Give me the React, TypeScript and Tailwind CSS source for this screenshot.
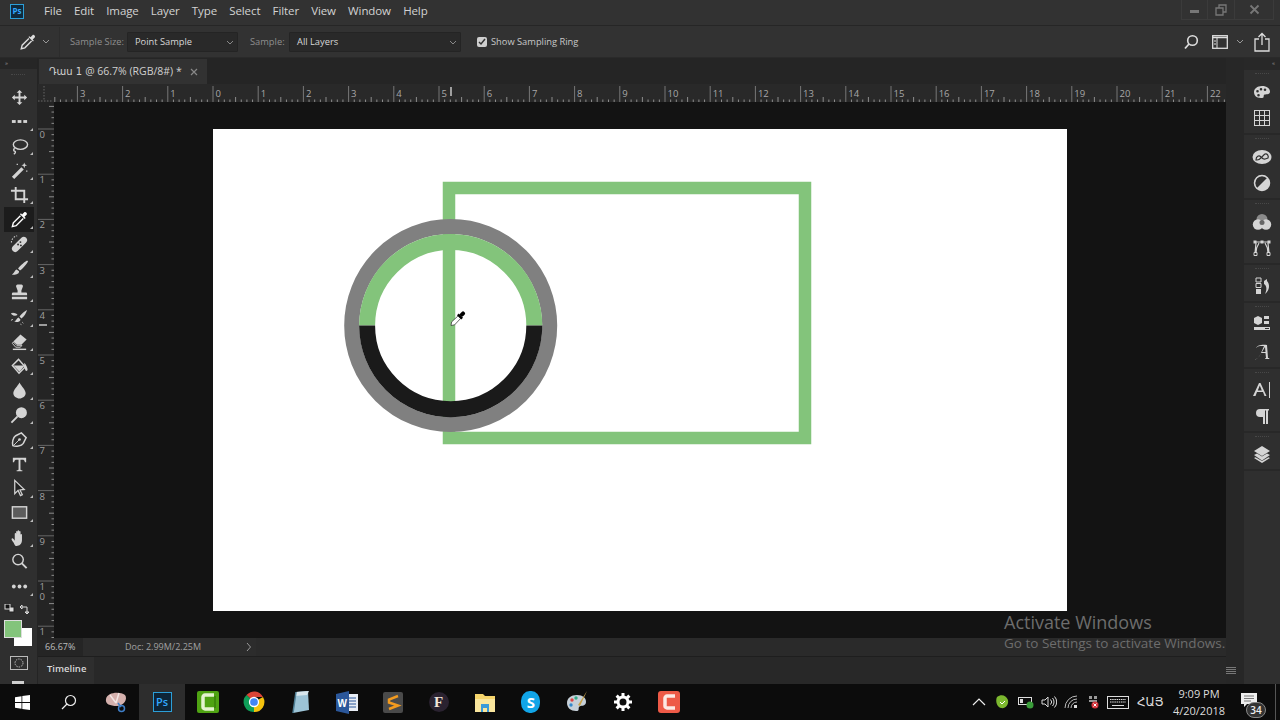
import React from "react";

const F = "[font-family:'Open_Sans','Noto_Sans','DejaVu_Sans',sans-serif]";

const Svg = ({ s = 20, c = "", children }: { s?: number; c?: string; children: React.ReactNode }) => (
  <svg width={s} height={s} viewBox="0 0 20 20" className={c} fill="#d4d4d4" stroke="none">{children}</svg>
);
const L = "#d4d4d4";
const line = { fill: "none", stroke: L, strokeWidth: 1.5 } as const;

const tools: React.ReactNode[] = [
  <path d="M10 2l3 3h-2v4h4V7l3 3-3 3v-2h-4v4h2l-3 3-3-3h2v-4H5v2l-3-3 3-3v2h4V5H7z" />,
  <><rect x="2" y="8.500" width="4" height="3" /><rect x="8" y="8.500" width="4" height="3" /><rect x="14" y="8.500" width="4" height="3" /></>,
  <><ellipse cx="11" cy="8" rx="7.500" ry="5" {...line} /><path d="M5 12c-2 1-1 3 0 3s1 2-1 3" {...line} /></>,
  <><path d="M2 16.500l10-10 2.500 2.500-10 10z" /><path d="M15 1.500l.8 2.200 2.200.8-2.200.8-.8 2.200-.8-2.200-2.200-.8 2.200-.8zM7 3h1.300v1.300H7zM17 10h1.300v1.300H17z" /></>,
  <path d="M5 1h2v3h9v9h3v2h-3v3h-2v-3H5V6H1V4h4zM7 6v7h7V6z" />,
  <><path d="M11 6L3.500 13.500 2.500 17.500 6.500 16.500 14 9" fill="none" stroke="#fff" strokeWidth="1.500" /><path d="M10.500 4.500l5 5 1-1-1.300-1.300 2.300-2.300c1.200-1.200-1.200-3.700-2.500-2.500l-2.300 2.300L11.500 3.500z" fill="#fff" /></>,
  <><path d="M3 13l9-9c1.500-1.500 3.500-1.500 5 0s1.500 3.500 0 5l-9 9c-1.500 1.500-3.500 1.500-5 0s-1.500-3.500 0-5z" /><circle cx="8.500" cy="11" r="1" fill="#2f2f2f" /><circle cx="11" cy="8.500" r="1" fill="#2f2f2f" /><circle cx="11.500" cy="12" r="1" fill="#2f2f2f" /><path d="M1.500 9a7 7 0 0 1 6-7" fill="none" stroke={L} strokeWidth="1.200" strokeDasharray="1.500 1.500" /></>,
  <path d="M18 1.500c-2 1-7 5-9.500 8.500l2 2c3-2 7-7 8.500-9.500zM7 11c-2 .500-2 3-5 5.500 3.500.500 8-.500 7.500-3.500z" />,
  <path d="M8 1.500h4c1 0 2 1 1.500 2.500L12 8v2h5c1 0 1 1 1 3H2c0-2 0-3 1-3h5V8L6.500 4C6 2.500 7 1.500 8 1.500zM2 14.500h16V17H2z" />,
  <><path d="M18 2c-2 1-6 4-8 7l2 2c3-2 5-6 6-9zM9 10c-2 .500-2 3-4.500 4.500 3 .500 6.500 0 6.500-2.500z" /><path d="M1.500 6c2-1 4 0 6 1-2 1-4 1-6-1zM1 13l2-1M13 15l1 1M11 17l1 .5" stroke={L} fill={L} /></>,
  <><path d="M11 2.500l6.500 5.500-5.500 5.500H7.500L3.500 10z" /><path d="M3.500 10.500l3.500 3.500h5.500l-1.500 2H6l-3.500-4z" fill="#2f2f2f" stroke={L} /><path d="M3 17.500h14V19H3z" /></>,
  <><path d="M2.500 9L9 2.500l7 8-6.500 6.500z" fill="none" stroke={L} strokeWidth="1.500" /><path d="M3.500 9h12l-5.500 6.500z" /><path d="M15 6c2 2 3.500 5 3.500 7.500 0 1.500-2.500 1.500-2.500 0l-1-4z" /></>,
  <path d="M10 1.500c2 4 6.500 7.500 6.500 11.500 0 3.200-3.300 5.500-6.500 5.500S3.500 16.200 3.500 13c0-4 4.500-7.500 6.500-11.500z" />,
  <><circle cx="12" cy="7" r="5.800" /><path d="M8 11l-6.500 6.500" stroke={L} strokeWidth="2" /></>,
  <><path d="M3 16.500c-1-3 0-8.500 3-10.500l6-3 5 5-3 6c-2 3-8 4-11 2.500z" fill="none" stroke={L} strokeWidth="1.600" /><path d="M3.500 16.500l6-6" stroke={L} /><circle cx="10" cy="10" r="1.400" /></>,
  <path d="M3 3h14v4.500h-1.300C15.300 5.500 14.500 5 13 5h-2v10c0 .8.500 1 2 1v1H7v-1c1.500 0 2-.2 2-1V5H7C5.500 5 4.700 5.500 4.300 7.500H3z" />,
  <path d="M5 1.500l10 9.500-4.500.5 2.500 5-2 1-2.500-5.500L5 15.500z" fill="#222" stroke={L} strokeWidth="1.300" />,
  <rect x="2.500" y="4" width="15" height="12" fill="#5c5c5c" stroke={L} strokeWidth="1.500" />,
  <path d="M5 11V6c0-1 1.500-1 1.500 0v3-5c0-1 1.500-1 1.500 0v5-6c0-1 1.600-1 1.600 0v6-5c0-1 1.500-1 1.500 0v6-3c0-1 1.500-1 1.500 0v6c0 4-3 6-5.500 6S5 17 3.500 15 1 11.500 2 11s2 1 3 2.500z" />,
  <><circle cx="8.500" cy="8" r="5.500" fill="none" stroke={L} strokeWidth="1.500" /><path d="M12.500 12l5 5" stroke={L} strokeWidth="2" /></>,
  <><circle cx="4" cy="10" r="2" /><circle cx="10" cy="10" r="2" /><circle cx="16" cy="10" r="2" /></>,
];

const dock: React.ReactNode[][] = [
  [<path d="M10 4c5 0 8 2.500 8 5.500 0 4-5 2-6 3.500s1 3-3 3C4 16 2 13 2 10s3-6 8-6zM5.500 8a1.300 1.300 0 1 0 0 2.600 1.300 1.300 0 0 0 0-2.600zM9 6a1.300 1.300 0 1 0 0 2.600A1.300 1.300 0 0 0 9 6zM13 6.500a1.300 1.300 0 1 0 0 2.600 1.300 1.300 0 0 0 0-2.600zM6.500 12a1.300 1.300 0 1 0 0 2.600 1.300 1.300 0 0 0 0-2.600z" fillRule="evenodd" />,
   <path d="M2 2h16v16H2zM3 3v4h4V3zm5 0v4h4V3zm5 0v4h4V3zM3 8v4h4V8zm5 0v4h4V8zm5 0v4h4V8zM3 13v4h4v-4zm5 0v4h4v-4zm5 0v4h4v-4z" fillRule="evenodd" />],
  [<><ellipse cx="10" cy="10" rx="9.500" ry="7" /><path d="M4 13c0-4 3-5 5-3s3 3 7 1c1-2-1-5-3-4-3 2-4 6-8 6z" fill="none" stroke="#2f2f2f" strokeWidth="1.200" /></>,
   <><circle cx="10" cy="10" r="7.500" /><path d="M15 5A7 7 0 0 0 5 15z" fill="#2f2f2f" /><circle cx="10" cy="10" r="7.500" fill="none" stroke={L} strokeWidth="1.500" /></>],
  [<><circle cx="10" cy="7.500" r="5.500" fill="#8a8a8a" /><circle cx="6" cy="12.500" r="5.200" /><circle cx="14" cy="12.500" r="5.200" /><circle cx="10" cy="10.500" r="2.500" fill="#666" /></>,
   <><path d="M3 4h14M4 5l-1 10M16 5l1 10M7 5c-2 3-3 6-3 10M13 5c2 3 3 6 3 10" fill="none" stroke={L} strokeWidth="1.200" /><path d="M1.500 2.500h3v3h-3zM15.500 2.500h3v3h-3zM8.500 2.500h3v3h-3z" /><path d="M2 14.500h3v3H2zM15 14.500h3v3h-3z" fill="#2f2f2f" stroke={L} /></>],
  [<><path d="M4 2h5v4H4z" fill="none" stroke={L} /><path d="M4 7.500h5v4H4z" fill="none" stroke={L} /><path d="M4 13h5v5H4z" /><path d="M12 5l3-2v2c3 3 3 9-2 13 2-4 2-8-1-10v2z" /></>],
  [<><path d="M6 3l4 2v5l-4 2-4-2V5z" /><path d="M12 3h5v3h-5zM12 8h5v3h-5zM2 14h16v3H2z" /><path d="M13 15h4v1h-4z" fill="#2f2f2f" /></>,
   <path d="M3 17c3 0 4-2 6-6l3-7c-2 0-6-.500-8 2 1-3 7-4 11-3l1 13h1l.500 1h-4l-.500-1h1l-.500-5H9c-2 4-4 7-6 6zm7-7h3.500L13 5z" />],
  [<><path d="M1 16L7 3h1.500l6 13h-2l-1.500-4H5l-1.500 4zM5.800 10.500h4L7.800 5.500z" /><path d="M17 2h1v16h-1z" /></>,
   <path d="M8 3h9v1.500h-1V18h-2V4.500h-1V18h-2v-7H8a4 4 0 0 1 0-8z" />],
  [<path d="M10 2l8 5-8 5-8-5zM2 11l3-1.500 5 3 5-3 3 1.500-8 5.500z M2 14l1.500-.8L10 17l6.500-3.800L18 14l-8 5z" />],
];
const dockPad = [
  "pt-[12px] pb-[5px] gap-[6px]",
  "pt-[12px] pb-[5px] gap-[6px]",
  "pt-[12px] pb-[5px] gap-[6px]",
  "pt-[11px] pb-[5px] gap-[6px]",
  "pt-[10px] pb-[5px] gap-[9px]",
  "pt-[11px] pb-[5px] gap-[6px]",
  "pt-[11px] pb-[5px] gap-[6px]",
];

function HRuler() {
  const W = 1188;
  const ticks: React.ReactNode[] = [];
  for (let i = -28; i <= 180; i++) {
    const x = 213 - 38 + (i * 45.2) / 8;
    if (x < 0 || x > W) continue;
    const m = ((i % 8) + 8) % 8;
    const y = m === 0 ? 2 : m === 4 ? 13 : 15.5;
    ticks.push(<line key={i} x1={x} x2={x} y1={y} y2={18} stroke={m === 0 ? "#777" : "#8c8c8c"} strokeWidth="1" />);
  }
  const labels: React.ReactNode[] = [];
  for (let n = -3; n <= 22; n++) {
    labels.push(
      <text key={n} x={213 - 38 + n * 45.2 + 2.5} y={13} fontSize="9.500" fill="#a8a8a8" fontFamily="'Open Sans',sans-serif">{Math.abs(n)}</text>
    );
  }
  return (
    <svg width={W} height={18} className="block">
      {ticks}
      {labels}
      <path d="M0 17h14M6 2v15" stroke="#666" strokeDasharray="1.500 1.500" />
      <line x1={413} x2={413} y1="3" y2="12" stroke="#eee" strokeWidth="1.200" />
    </svg>
  );
}

function VRuler() {
  const H = 536;
  const ticks: React.ReactNode[] = [];
  for (let i = -4; i <= 90; i++) {
    const y = 129 - 102 + (i * 45.2) / 8;
    if (y < 0 || y > H) continue;
    const m = ((i % 8) + 8) % 8;
    const x = m === 0 ? 0 : m === 4 ? 11 : 13.5;
    ticks.push(<line key={i} y1={y} y2={y} x1={x} x2={16} stroke={m === 0 ? "#666" : "#8c8c8c"} strokeWidth="1" />);
  }
  const labels: React.ReactNode[] = [];
  for (let n = 0; n <= 11; n++) {
    const y0 = 129 - 102 + n * 45.2 + 9;
    const s = n === 11 ? "1" : String(n);
    s.split("").forEach((ch, k) =>
      labels.push(<text key={n + "-" + k} x={1.5} y={y0 + k * 10} fontSize="9.500" fill="#a0a0a0" fontFamily="'Open Sans',sans-serif">{ch}</text>)
    );
  }
  return (
    <svg width={16} height={H} className="block">
      {ticks}
      {labels}
      <line x1="1" x2="9" y1={223} y2={223} stroke="#eee" strokeWidth="1.200" />
    </svg>
  );
}

function Art() {
  const cx = 450.7, cy = 325.6, r = 83.6;
  return (
    <svg width={854} height={482} viewBox="213 129 854 482" className="block">
      <rect x="449" y="188" width="356" height="250" fill="none" stroke="#83c47b" strokeWidth="12.500" />
      <circle cx={cx} cy={cy} r={99} fill="none" stroke="#808080" strokeWidth="15" />
      <path d={`M${cx - r} ${cy}A${r} ${r} 0 0 1 ${cx + r} ${cy}`} fill="none" stroke="#83c47b" strokeWidth="16" />
      <path d={`M${cx - r} ${cy}A${r} ${r} 0 0 0 ${cx + r} ${cy}`} fill="none" stroke="#1a1a1a" strokeWidth="16" />
      <g transform="translate(459.500 317) rotate(45)">
        <path d="M-1.800 0h3.600l.3 9-2.100 3-2.100-3z" fill="#fff" stroke="#333" strokeWidth=".7" />
        <rect x="-3" y="-2" width="6" height="2.500" fill="#000" />
        <rect x="-2" y="-7" width="4" height="5.500" rx="1.800" fill="#000" />
      </g>
    </svg>
  );
}

const Task = ({ c = "", children }: { c?: string; children: React.ReactNode }) => (
  <div className={`w-[46.100px] h-full flex items-center justify-center ${c}`}>{children}</div>
);
const TB = ({ children, v = "0 0 28 28" }: { children: React.ReactNode; v?: string }) => (
  <svg width="28" height="28" viewBox={v}>{children}</svg>
);

const Chevron = () => (
  <svg width="8" height="6" viewBox="0 0 8 6" className="absolute right-[3px] top-[7px]"><path d="M1 1l3 3 3-3" fill="none" stroke="#888" strokeWidth="1" /></svg>
);

export default function App() {
  return (
    <div className={`relative w-[1280px] h-[720px] overflow-hidden flex flex-col bg-[#262626] text-[#d0d0d0] ${F}`}>
      {/* Title bar */}
      <div className="h-[26px] shrink-0 bg-[#323232] border-b border-[#262626] flex items-center relative pb-[3px]">
        <div className="w-[44px] flex justify-center">
          <div className="w-[14px] h-[15px] -ml-[10px] bg-[#0f2a3d] border border-[#2c9fd8] flex items-center justify-center text-[8px] text-[#31a8ff] font-bold leading-none">Ps</div>
        </div>
        <div className="flex text-[11.500px] text-[#d2d2d2] gap-[12.200px] tracking-[-0.1px]">
          {["File", "Edit", "Image", "Layer", "Type", "Select", "Filter", "View", "Window", "Help"].map((m) => (
            <span key={m}>{m}</span>
          ))}
        </div>
        <div className="absolute right-[6px] top-0 h-[20px] w-[93px] border border-[#3b3b3b] border-t-0 flex items-center">
          <div className="w-[26px] h-full flex items-center justify-center border-r border-[#3b3b3b]"><div className="w-[9px] h-[3px] bg-[#777] mt-[4px]" /></div>
          <div className="w-[27px] h-full flex items-center justify-center border-r border-[#3b3b3b]">
            <svg width="12" height="12" viewBox="0 0 12 12"><path d="M1 4h7v7H1zM4 4V1h7v7H8" fill="none" stroke="#777" strokeWidth="1.300" /></svg>
          </div>
          <div className="flex-1 flex items-center justify-center">
            <svg width="11" height="11" viewBox="0 0 11 11"><path d="M1.500 1.500l8 8M9.500 1.500l-8 8" stroke="#777" strokeWidth="1.800" /></svg>
          </div>
        </div>
      </div>

      {/* Options bar */}
      <div className="h-[32px] shrink-0 bg-[#323232] border-b border-[#2a2a2a] flex items-center relative pt-[1px]">
        <div className="w-[60px] h-full flex items-center border-r border-[#2c2c2c] pl-[19px] gap-[5px]">
          <svg width="18" height="18" viewBox="0 0 20 20">
            <path d="M11 6L3.500 13.500 2.500 17.500 6.500 16.500 14 9" fill="none" stroke="#ddd" strokeWidth="1.500" />
            <path d="M10.500 4.500l5 5 1-1-1.300-1.300 2.300-2.300c1.200-1.200-1.200-3.700-2.500-2.500l-2.300 2.300L11.500 3.500z" fill="#ddd" />
          </svg>
          <svg width="8" height="6" viewBox="0 0 8 6"><path d="M1 1l3 3 3-3" fill="none" stroke="#999" /></svg>
        </div>
        <span className="ml-[10px] w-[57px] text-[9.300px] text-[#8f8f8f] whitespace-nowrap">Sample Size:</span>
        <div className="relative w-[111px] h-[20px] bg-[#292929] border border-[#242424] flex items-center pl-[7px] text-[9.300px] text-[#d8d8d8] rounded-[1px]">Point Sample<Chevron /></div>
        <span className="ml-[12px] w-[39px] text-[9.300px] text-[#8f8f8f]">Sample:</span>
        <div className="relative w-[172px] h-[20px] bg-[#292929] border border-[#242424] flex items-center pl-[7px] text-[9.300px] text-[#d8d8d8] rounded-[1px]">All Layers<Chevron /></div>
        <div className="ml-[16px] w-[10px] h-[10px] rounded-[2px] bg-[#cfcfcf] flex items-center justify-center">
          <svg width="8" height="8" viewBox="0 0 8 8"><path d="M1 4l2 2 4-5" fill="none" stroke="#333" strokeWidth="1.500" /></svg>
        </div>
        <span className="ml-[4px] text-[9.300px] text-[#c8c8c8]">Show Sampling Ring</span>
        <div className="ml-auto flex items-center pr-[10px]">
          <svg width="16" height="16" viewBox="0 0 16 16" className="mr-[13px]"><circle cx="9.500" cy="6.500" r="4.800" fill="none" stroke="#ddd" strokeWidth="1.600" /><path d="M6 10l-4 4.500" stroke="#ddd" strokeWidth="1.800" /></svg>
          <svg width="16" height="14" viewBox="0 0 16 14" className="mr-[8px]"><rect x=".7" y=".7" width="14.600" height="12.600" fill="none" stroke="#ddd" strokeWidth="1.300" /><path d="M.7 2.500h14.600" stroke="#ddd" strokeWidth="1.500" /><path d="M5 3v10" stroke="#ddd" /><path d="M2 6h2M2 9h2" stroke="#ddd" /></svg>
          <svg width="8" height="6" viewBox="0 0 8 6" className="mr-[10px]"><path d="M1 1l3 3 3-3" fill="none" stroke="#999" /></svg>
          <svg width="16" height="20" viewBox="0 0 16 20"><path d="M5 7H1v12h14V7h-4M8 13V2M4.500 5L8 1.500 11.500 5" fill="none" stroke="#ddd" strokeWidth="1.300" /></svg>
        </div>
      </div>

      {/* Main */}
      <div className="flex-1 min-h-0 flex">
        {/* Left toolbar */}
        <div className="w-[38px] shrink-0 bg-[#2f2f2f] border-r border-[#242424] flex flex-col overflow-hidden">
          <div className="h-[11px] shrink-0 bg-[#262626] pl-[5px] text-[6px] leading-[10px] text-[#999]">»</div>
          <div className="h-[16px] shrink-0 pt-[5px] pl-[11px]"><div className="w-[14px] border-t border-dotted border-[#484848]" /></div>
          <div className="flex flex-col">
            {tools.map((t, i) => (
              <div key={i} className={`relative h-[24.460px] shrink-0 flex items-center justify-center w-[30px] ml-[4px] ${i === 5 ? "bg-[#1c1c1c]" : ""}`}>
                <Svg s={19}>{t}</Svg>
                {i !== 0 && i !== 15 && i !== 19 ? <span className="absolute right-[1px] bottom-[3px] w-0 h-0 border-l-[3px] border-l-transparent border-b-[3px] border-b-[#bbb]" /> : null}
              </div>
            ))}
          </div>
          <div className="relative h-[50px] shrink-0">
            <svg width="32" height="14" viewBox="0 0 32 14" className="absolute left-[3px] top-[5px]">
              <rect x="6" y="3" width="5" height="5" fill="#ddd" stroke="#222" /><rect x="2" y="0" width="5" height="5" fill="#111" stroke="#ddd" />
              <path d="M19 3h5v6M17 3l2-2v4zM24 10l-2-2h4z" fill="none" stroke="#ddd" />
            </svg>
            <div className="absolute left-[14px] top-[29px] w-[18px] h-[18px] bg-white" />
            <div className="absolute left-[4px] top-[21px] w-[18px] h-[18px] bg-[#83c47b] border border-[#ddd]" />
          </div>
          <div className="h-[22px] mt-[3px] shrink-0 flex items-center justify-center">
            <svg width="18" height="14" viewBox="0 0 18 14"><rect x=".5" y=".5" width="17" height="13" fill="none" stroke="#bbb" /><circle cx="9" cy="7" r="4" fill="none" stroke="#bbb" strokeDasharray="1.500 1" /></svg>
          </div>
          <div className="h-[8px] w-[12px] ml-[12px] mt-[7px] shrink-0 bg-[#cfcfcf]" />
        </div>

        {/* Center */}
        <div className="flex-1 min-w-0 flex flex-col">
          <div className="h-[26px] shrink-0 bg-[#252525] flex items-end">
            <div className="w-[168px] ml-[1px] h-[25px] bg-[#323232] flex items-center pl-[10px] text-[10.500px] text-[#d0d0d0] whitespace-nowrap">
              <span className="[font-family:'DejaVu_Sans',sans-serif] text-[10px]">Դաս 1</span>
              <span className="ml-[3px]">@ 66.7% (RGB/8#) *</span>
              <svg width="8" height="8" viewBox="0 0 8 8" className="ml-[8px]"><path d="M1 1l6 6M7 1L1 7" stroke="#888" strokeWidth="1.200" /></svg>
            </div>
          </div>
          <div className="h-[18px] shrink-0 bg-[#292929]"><HRuler /></div>
          <div className="flex-1 min-h-0 flex">
            <div className="w-[16px] shrink-0 bg-[#242424]"><VRuler /></div>
            <div className="flex-1 min-w-0 bg-[#131313] pt-[27px] pl-[159px] overflow-hidden">
              <div className="w-[854px] h-[482px] bg-white"><Art /></div>
            </div>
          </div>
          <div className="h-[18px] shrink-0 bg-[#2a2a2a] flex items-center text-[9px] text-[#a0a0a0]">
            <div className="w-[45px] h-full bg-[#252525] pl-[7px] flex items-center text-[#bdbdbd]">66.67%</div>
            <div className="w-[173px] h-full bg-[#2c2c2c] flex items-center pl-[42px] relative">
              Doc: 2.99M/2.25M
              <svg width="6" height="10" viewBox="0 0 6 10" className="absolute right-[4px] top-[4px]"><path d="M1 1l3.500 4L1 9" fill="none" stroke="#999" /></svg>
            </div>
          </div>
          <div className="h-[28px] shrink-0 bg-[#282828] border-t border-[#1e1e1e] flex items-stretch">
            <div className="w-[56px] bg-[#2e2e2e] flex items-center pl-[9px] pb-[2px] text-[9.500px] font-semibold text-[#d8d8d8]">Timeline</div>
            <div className="ml-auto -mr-[10px] relative z-10 flex items-center">
              <svg width="10" height="8" viewBox="0 0 10 8"><path d="M0 .5h10M0 2.500h10M0 4.500h10M0 6.500h10" stroke="#777" /></svg>
            </div>
          </div>
        </div>

        {/* Right */}
        <div className="w-[54px] shrink-0 flex bg-[#282828]">
          <div className="w-[18px] bg-[#272727]" />
          <div className="w-[36px] flex flex-col">
            <div className="h-[12px] shrink-0 flex justify-end pr-[5px] text-[6px] leading-[10px] text-[#999]">«</div>
            {dock.map((g, i) => (
              <div key={i} className={`relative bg-[#2f2f2f] mb-[2px] flex flex-col items-center ${dockPad[i]}`}>
                <div className="absolute left-[11px] top-[3px] w-[14px] border-t border-dotted border-[#484848]" />
                {g.map((ic, k) => (<Svg key={k} s={20}>{ic}</Svg>))}
              </div>
            ))}
            <div className="flex-1 bg-[#2f2f2f]" />
          </div>
        </div>
      </div>

      {/* Taskbar */}
      <div className="h-[36px] shrink-0 bg-[#0c0c0c] flex items-center relative">
        <div className="w-[44px] flex justify-center">
          <svg width="15" height="15" viewBox="0 0 15 15"><path d="M0 2.200L6.500 1.200V7H0zM7.300 1.100L15 0v7H7.300zM0 8h6.500v5.800L0 12.800zM7.300 8H15v7l-7.700-1.100z" fill="#fff" /></svg>
        </div>
        <div className="w-[49px] flex justify-center">
          <svg width="16" height="16" viewBox="0 0 16 16"><circle cx="9.500" cy="6.500" r="5" fill="none" stroke="#eee" strokeWidth="1.200" /><path d="M6 10l-5 5" stroke="#eee" strokeWidth="1.200" /></svg>
        </div>
        <Task>
          <TB><path d="M4 11c1-7 14-8 19-4 3 4-1 11-8 11S3 16 4 11z" fill="#d5b1ad" /><path d="M8 7l6 8M17 5l-3 10" stroke="#f2e6e4" strokeWidth="1.500" /><circle cx="19.500" cy="20.500" r="3" fill="none" stroke="#3f7fc8" strokeWidth="1.500" /><path d="M16 15l3 4" stroke="#3f7fc8" strokeWidth="1.500" /></TB>
        </Task>
        <Task c="bg-[#2d2d2d]">
          <div className="w-[19px] h-[20px] bg-[#0e2537] border border-[#2c9fd8] flex items-center justify-center text-[11px] font-semibold text-[#31a8ff]">Ps</div>
        </Task>
        <Task>
          <TB><rect x="3" y="3" width="22" height="22" rx="2" fill="#4fa313" /><path d="M20 7h-9c-1 0-2 1-2 2v10c0 1 1 2 2 2h9" fill="none" stroke="#e4f3cf" strokeWidth="3.500" /><path d="M21 8v12" stroke="#2d6d07" strokeWidth="1" /></TB>
        </Task>
        <Task>
          <TB>
            <path d="M14 14L6.500 7a10 10 0 0 1 16.500 2H14z" fill="#db4437" />
            <path d="M14 14l9-5a10 10 0 0 1-9 15z" fill="#f4c20d" />
            <path d="M14 24A10 10 0 0 1 6.500 7L14 14z" fill="#0f9d58" />
            <circle cx="14" cy="14" r="4.500" fill="#4285f4" stroke="#fff" strokeWidth="1.300" />
          </TB>
        </Task>
        <Task>
          <TB><path d="M10 4l12-1 1 19-16 3z" fill="#9cc3d6" /><path d="M10 4l13-1-2 4-12 1z" fill="#d8e6ec" /><path d="M7 25l3-21" stroke="#4f7f95" strokeWidth="1.500" /></TB>
        </Task>
        <Task>
          <TB><rect x="11" y="6" width="14" height="17" fill="#e8edf5" /><path d="M16 10h7M16 13h7M16 16h7M16 19h7" stroke="#2b579a" /><path d="M3 6l13-3v23L3 23z" fill="#2b579a" /><text x="4.500" y="18.500" fontSize="10" fontWeight="700" fill="#fff" fontFamily="'Liberation Sans',sans-serif">W</text></TB>
        </Task>
        <Task>
          <TB><rect x="4" y="4" width="20" height="21" rx="2" fill="#4a4a4a" /><path d="M19 8L10 11.500v3l9 3-9 3.500" fill="none" stroke="#f29a1f" strokeWidth="2.500" /></TB>
        </Task>
        <Task>
          <div className="w-[20px] h-[20px] rounded-full bg-[#2a2230] flex items-center justify-center text-[15px] font-black text-[#f0e4d8] [font-family:'Liberation_Serif',serif]">F</div>
        </Task>
        <Task>
          <TB><path d="M4 6h8l2 2h10v16H4z" fill="#f6d56c" /><path d="M4 11h20v13H4z" fill="#fae69e" /><rect x="10" y="16" width="8" height="8" fill="#3a9ad9" /><rect x="12" y="20" width="4" height="4" fill="#fae69e" /></TB>
        </Task>
        <Task>
          <div className="w-[19px] h-[22px] rounded-[45%] bg-[#11a5e8] flex items-center justify-center text-[15px] font-bold text-white leading-none">S</div>
        </Task>
        <Task>
          <TB><path d="M14 7c6 0 9 3 9 7 0 5-6 3-7 5s1 4-3 4c-5 0-9-3-9-8s4-8 10-8z" fill="#c6d0d8" /><circle cx="9" cy="12" r="1.700" fill="#d44" /><circle cx="13" cy="10" r="1.700" fill="#3a8" /><circle cx="8" cy="17" r="1.700" fill="#38c" /><path d="M24 3l-9 14 2 1z" fill="#c9a24a" /></TB>
        </Task>
        <Task>
          <svg width="20" height="20" viewBox="0 0 20 20"><circle cx="10" cy="10" r="5" fill="none" stroke="#fff" strokeWidth="3" /><path d="M10 1v4M10 15v4M1 10h4M15 10h4M3.600 3.600l2.800 2.800M13.600 13.600l2.800 2.800M16.400 3.600l-2.800 2.800M6.400 13.600l-2.800 2.800" stroke="#fff" strokeWidth="3" /></svg>
        </Task>
        <Task>
          <TB><rect x="3" y="3" width="22" height="22" rx="3" fill="#ee5a47" /><path d="M20 8h-8c-1 0-2 1-2 2v8c0 1 1 2 2 2h8" fill="none" stroke="#fde9e4" strokeWidth="3.500" /></TB>
        </Task>

        {/* Tray */}
        <div className="ml-auto flex items-center text-[#ddd] h-full">
          <svg width="14" height="8" viewBox="0 0 14 8" className="mr-[8px]"><path d="M1 7l6-6 6 6" fill="none" stroke="#eee" strokeWidth="1.200" /></svg>
          <svg width="16" height="16" viewBox="0 0 16 16" className="mr-[8px]"><path d="M3 3c4-3 9-2 11 3 1 5-3 9-7 8S1 7 3 3z" fill="#7cb82f" /><path d="M6 8l2 2 3-3" stroke="#fff" fill="none" /></svg>
          <svg width="16" height="14" viewBox="0 0 16 14" className="mr-[7px]"><rect x=".5" y="2.500" width="13" height="7" fill="none" stroke="#ddd" /><rect x="2" y="4" width="3" height="4" fill="#ddd" /><circle cx="12" cy="10" r="3.500" fill="#3a9d3a" /></svg>
          <svg width="16" height="14" viewBox="0 0 16 14" className="mr-[7px]"><path d="M1 5h3l3-3v10L4 9H1z" fill="none" stroke="#ddd" /><path d="M9.500 4.500a3.500 3.500 0 0 1 0 5M11.500 3a6 6 0 0 1 0 8M13.500 1.500a8 8 0 0 1 0 11" fill="none" stroke="#ddd" /></svg>
          <svg width="15" height="14" viewBox="0 0 15 14" className="mr-[7px]"><path d="M1 13A12 12 0 0 1 13 1M4 13a9 9 0 0 1 9-9M7 13a6 6 0 0 1 6-6" fill="none" stroke="#bbb" /><rect x="10" y="10" width="3" height="3" fill="#ddd" /></svg>
          <svg width="14" height="14" viewBox="0 0 14 14" className="mr-[7px]"><path d="M3 1h3v3H3zM8 1h3v3H8zM3 5h8v2H3z" fill="#999" /><circle cx="9" cy="10" r="3.500" fill="#d4343c" /><path d="M7.500 8.500l3 3M10.500 8.500l-3 3" stroke="#fff" /></svg>
          <svg width="22" height="13" viewBox="0 0 22 13" className="mr-[8px]"><rect x=".5" y=".5" width="21" height="12" fill="none" stroke="#ddd" /><path d="M3 3.500h16M3 6h16" stroke="#ddd" strokeDasharray="1.500 .7" /><path d="M5 9.500h12" stroke="#ddd" /></svg>
          <span className="w-[26px] text-[12px] text-[#ddd] mr-[7px] text-center [font-family:'DejaVu_Sans',sans-serif] whitespace-nowrap">ՀԱՅ</span>
          <div className="w-[58px] flex flex-col items-center text-[11px] leading-[17px] text-[#ddd]">
            <span>9:09 PM</span>
            <span>4/20/2018</span>
          </div>
          <div className="relative w-[48px] h-full mr-[4px] border-r border-[#555] pr-[5px] flex items-center justify-center">
            <svg width="16" height="15" viewBox="0 0 16 15" className="-mt-[3px]"><path d="M0 0h16v11H6l-3 3v-3H0z" fill="#eee" /><path d="M3 3h10M3 5.500h10M3 8h7" stroke="#777" /></svg>
            <div className="absolute left-[18px] top-[18px] w-[20px] h-[16px] rounded-full bg-[#333] border border-[#888] text-[10px] leading-[14px] text-center font-semibold text-[#eee]">34</div>
          </div>
        </div>
      </div>

      {/* Windows watermark over everything */}
      <div className="absolute left-[1004px] top-[610px] text-[#6d6d6d] whitespace-nowrap pointer-events-none">
        <div className="text-[18px] leading-[24px]">Activate Windows</div>
        <div className="text-[13.500px] leading-[20px] mt-[-1px]">Go to Settings to activate Windows.</div>
      </div>
    </div>
  );
}
